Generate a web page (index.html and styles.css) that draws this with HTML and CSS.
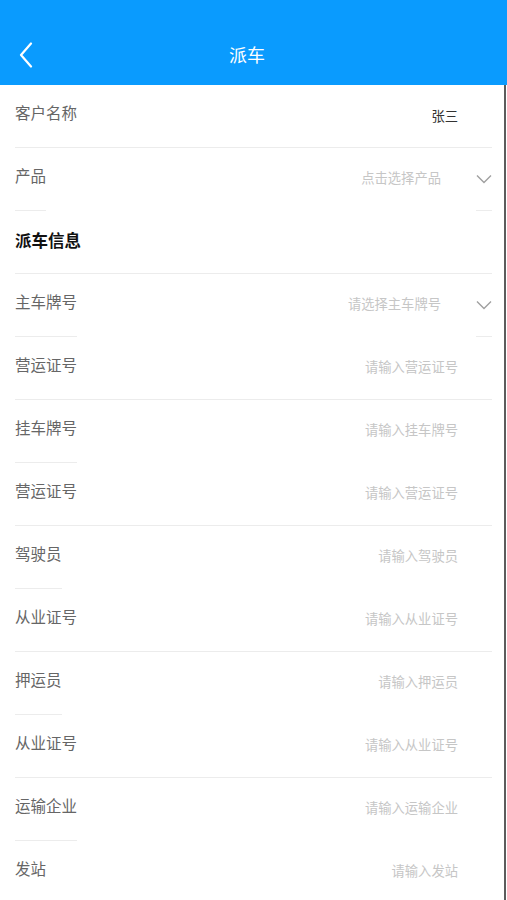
FILE: index.html
```html
<!DOCTYPE html>
<html lang="zh-CN">
<head>
    <meta charset="UTF-8">
    <meta name="viewport" content="width=device-width, initial-scale=1.0">
    <title>派车</title>
    <link rel="stylesheet" href="styles.css">
</head>
<body>
    <header class="nav-bar">
        <div class="nav-inner">
            <a class="nav-back" href="#">
                <svg width="14" height="26" viewBox="0 0 14 26">
                    <polyline points="12,1.5 2,13 12,24.5" fill="none" stroke="#fff" stroke-width="2.2" stroke-linecap="round" stroke-linejoin="round"/>
                </svg>
            </a>
            <h1 class="nav-title">派车</h1>
            <div class="nav-right"></div>
        </div>
    </header>

    <main class="form">
        <div class="row">
            <span class="label">客户名称</span>
            <span class="value filled">张三</span>
        </div>
        <div class="row short picker">
            <span class="label">产品</span>
            <span class="value">点击选择产品</span>
            <span class="arrow">
                <svg width="16" height="10" viewBox="0 0 16 10">
                    <polyline points="1,1.5 8,8.5 15,1.5" fill="none" stroke="#a0a0a0" stroke-width="1.4"/>
                </svg>
            </span>
        </div>

        <div class="row section">
            <span class="section-title">派车信息</span>
        </div>

        <div class="row short picker">
            <span class="label">主车牌号</span>
            <span class="value">请选择主车牌号</span>
            <span class="arrow">
                <svg width="16" height="10" viewBox="0 0 16 10">
                    <polyline points="1,1.5 8,8.5 15,1.5" fill="none" stroke="#a0a0a0" stroke-width="1.4"/>
                </svg>
            </span>
        </div>
        <div class="row">
            <span class="label">营运证号</span>
            <span class="value">请输入营运证号</span>
        </div>
        <div class="row short">
            <span class="label">挂车牌号</span>
            <span class="value">请输入挂车牌号</span>
        </div>
        <div class="row">
            <span class="label">营运证号</span>
            <span class="value">请输入营运证号</span>
        </div>
        <div class="row short">
            <span class="label">驾驶员</span>
            <span class="value">请输入驾驶员</span>
        </div>
        <div class="row">
            <span class="label">从业证号</span>
            <span class="value">请输入从业证号</span>
        </div>
        <div class="row short">
            <span class="label">押运员</span>
            <span class="value">请输入押运员</span>
        </div>
        <div class="row">
            <span class="label">从业证号</span>
            <span class="value">请输入从业证号</span>
        </div>
        <div class="row short">
            <span class="label">运输企业</span>
            <span class="value">请输入运输企业</span>
        </div>
        <div class="row">
            <span class="label">发站</span>
            <span class="value">请输入发站</span>
        </div>
    </main>
</body>
</html>
```

FILE: styles.css
```css
body {
    margin: 0;
    padding: 0;
    background-color: #ffffff;
    font-family: "Noto Sans CJK SC", "Noto Sans", sans-serif;
    overflow: hidden;
}

/* Top bar */
.nav-bar {
    background-color: #0a9bfe;
    padding-top: 25px;
}

.nav-inner {
    display: flex;
    align-items: center;
    height: 60px;
}

.nav-back {
    width: 50px;
    display: flex;
    align-items: center;
    padding-left: 19px;
    box-sizing: border-box;
}

.nav-back svg {
    display: block;
}

.nav-title {
    flex: 1;
    margin: 0;
    padding-bottom: 2px;
    text-align: center;
    color: #ffffff;
    font-size: 18px;
    font-weight: normal;
}

.nav-right {
    width: 63px;
}

/* Form list */
.form {
    margin-right: 1px;
    border-right: 2px solid #5c5c5c;
    padding: 0 12px 0 15px;
    min-height: 815px;
}

.row {
    display: flex;
    align-items: center;
    height: 62px;
    border-bottom: 1px solid #ececec;
}

.row.short {
    height: 63px;
    border-bottom: none;
    align-items: stretch;
}

.label {
    color: #666666;
    font-size: 15.5px;
    display: flex;
    align-items: center;
    padding-bottom: 8px;
}

.row.short .label,
.row.short .arrow {
    border-bottom: 1px solid #ececec;
}

.value {
    margin-left: auto;
    margin-right: 34px;
    color: #c6c6c6;
    font-size: 13.3px;
    display: flex;
    align-items: center;
    padding-bottom: 4px;
}

.value.filled {
    color: #333333;
    padding-bottom: 2px;
}

.picker .value {
    margin-right: 35px;
}

.arrow {
    width: 16px;
    display: flex;
    align-items: center;
}

.arrow svg {
    display: block;
}

.section-title {
    color: #111111;
    font-size: 16.5px;
    font-weight: bold;
    padding-bottom: 4px;
}
```
